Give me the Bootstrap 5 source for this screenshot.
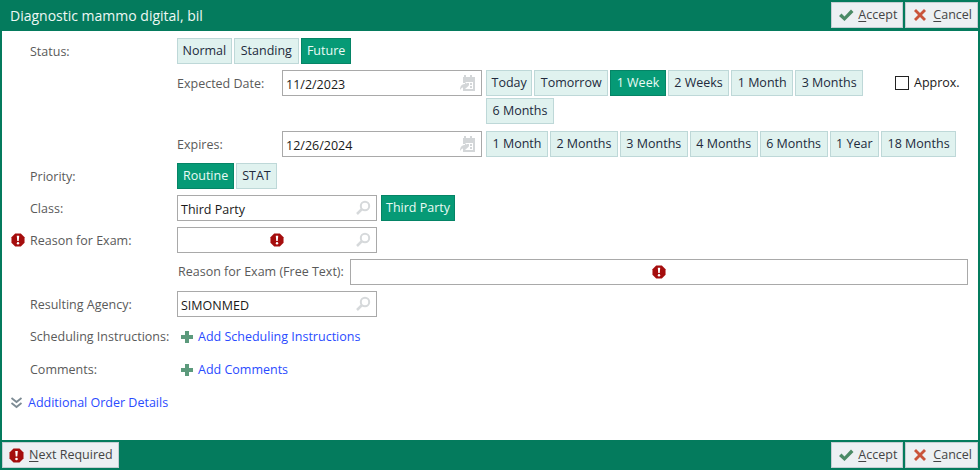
<!DOCTYPE html>
<html lang="en">
<head>
    <meta charset="UTF-8">
    <meta name="viewport" content="width=device-width, initial-scale=1.0">
    <title>Diagnostic mammo digital, bil</title>
    <link href="https://cdn.jsdelivr.net/npm/bootstrap@5.3.0/dist/css/bootstrap.min.css" rel="stylesheet">
    <style>
        html, body { height: 470px; overflow: hidden; }
        body { font-family: "Open Sans", "Noto Sans", sans-serif; font-size: 12.5px; color: #5a5a5a; background: #fff; }
        .order-form { height: 470px; width: 980px; border-left: 2px solid #047b5d; border-right: 2px solid #047b5d; }
        .order-head { height: 31px; margin: 0 -2px; background: #047b5d; color: #eef8f4; font-size: 14px; padding: 0 2px 1px 10px; }
        .order-foot { height: 30px; margin: 0 -2px; background: #047b5d; padding: 2px 2px 0 2px; }
        .order-body { height: 409px; padding: 7px 0 0 8px; }
        .act-btn { height: 26px; padding: 0 5px 0 6px; border: 1px solid #c5ced3; border-radius: 0; background: #ecf0f3; color: #444; font-size: 12.5px; line-height: 24px; display: inline-flex; align-items: center; gap: 4px; }
        .act-btn:hover { background: #ecf0f3; color: #444; border-color: #c5ced3; }
        .act-btn u { text-underline-offset: 2px; }
        .act-cancel { padding: 0 5px 0 7px; gap: 6px; }
        .act-next { gap: 5px; }
        .pick { height: 26px; padding: 0 5px; border: 1px solid #bed8d8; border-radius: 0; background: #e0f2ef; color: #222a3c; font-size: 12.5px; line-height: 24px; white-space: nowrap; }
        .pick:hover { background: #e0f2ef; color: #222a3c; border-color: #bed8d8; }
        .pick.on, .pick.on:hover { background: #069a76; border-color: #058466; color: #eafaf5; }
        .pick-set { gap: 2px; }
        .date-wrap { width: 380px; flex: none; }
        .date-picks .pick { padding: 0 5.5px; }
        .pick.pick-tight { padding: 0 4.5px; }
        .pick.pick-loose { padding: 0 6px; }
        .class-pick { padding: 0 4px; }
        .req-gutter { width: 20px; flex: none; display: flex; align-items: center; padding-left: 1px; }
        .row-label { width: 147px; flex: none; padding-top: 2px; }
        .field-row { min-height: 26px; margin-bottom: 6px; }
        .sub-label { width: 105px; flex: none; padding-top: 5px; }
        .sub-row { padding-left: 167px; }
        .date-row { margin-bottom: 7px; }
        .free-label { margin-left: 1px; }
        .box { height: 26px; width: 200px; flex: none; border: 1px solid #a9a9a9; background: #fff; color: #1a1a1a; padding: 3px 3px 0; position: relative; font-size: 12.5px; line-height: 22px; }
        .box-wide { flex: none; width: 618px; height: 26px; border: 1px solid #a9a9a9; position: relative; margin-left: 6px; }
        .box svg.end { position: absolute; right: 5px; top: 4px; }
        .box svg.mid, .box-wide svg.mid { position: absolute; left: 50%; top: 5px; margin-left: -7px; }
        .approx { margin-left: 29px; color: #1a1a1a; height: 26px; }
        .approx-box { width: 14px; height: 14px; border: 1px solid #222; margin-right: 5px; flex: none; }
        .add-link { color: #2a4bff; text-decoration: none; }
        .plus-link { padding-left: 4px; gap: 5px; padding-top: 2px; }
        .sched-row { margin-bottom: 7px; }
        .more-row { gap: 5px; margin-top: 12px; }
    </style>
</head>
<body>
    <svg class="d-none">
        <symbol id="ico-req" viewBox="0 0 15 15"><path d="M4.500.500h6l4 4v6l-4 4h-6l-4-4v-6z" fill="#a50d0d"/><path d="M6.200 3h2.600l-.5 5.500H6.700z" fill="#fff"/><circle cx="7.500" cy="11" r="1.300" fill="#fff"/></symbol>
        <symbol id="ico-find" viewBox="0 0 16 16"><circle cx="10" cy="6" r="4.200" fill="none" stroke="#d6d9db" stroke-width="2"/><path d="M7 9l-5 5" stroke="#d6d9db" stroke-width="2.500"/></symbol>
        <symbol id="ico-cal" viewBox="0 0 16 16"><path d="M4 0h2v2h4V0h2v2h3v14H3v-4h2v2h8V7H5v1H3V2h1z" fill="#d3d6d8"/><path d="M7 8h2v2H7zM10 8h2v2h-2zM10 11h2v2h-2z" fill="#d3d6d8"/><path d="M0 15c0-4 2-6 5-6V7l4 3.500L5 14v-2c-2 0-4 1-5 3z" fill="#d3d6d8"/></symbol>
        <symbol id="ico-ok" viewBox="0 0 16 14"><path d="M1 8l2.500-2.500 3 3L13 1.500l2.500 2.500L6.500 13z" fill="#4a8a66"/></symbol>
        <symbol id="ico-no" viewBox="0 0 14 14"><path d="M1 3l2-2 4 4 4-4 2 2-4 4 4 4-2 2-4-4-4 4-2-2 4-4z" fill="#c9533a"/></symbol>
        <symbol id="ico-plus" viewBox="0 0 12 12"><path d="M4 0h4v4h4v4H8v4H4V8H0V4h4z" fill="#5c9a7c"/></symbol>
    </svg>

    <div class="order-form d-flex flex-column">
        <div class="order-head d-flex align-items-center justify-content-between">
            <span>Diagnostic mammo digital, bil</span>
            <div class="d-flex pick-set">
                <button type="button" class="btn act-btn"><svg width="16" height="14"><use href="#ico-ok"/></svg><span><u>A</u>ccept</span></button>
                <button type="button" class="btn act-btn act-cancel"><svg width="14" height="14"><use href="#ico-no"/></svg><span><u>C</u>ancel</span></button>
            </div>
        </div>

        <div class="order-body flex-grow-1">
            <div class="field-row d-flex align-items-center">
                <div class="req-gutter"></div>
                <div class="row-label">Status:</div>
                <div class="d-flex pick-set">
                    <button type="button" class="btn pick pick-tight">Normal</button>
                    <button type="button" class="btn pick pick-loose">Standing</button>
                    <button type="button" class="btn pick on">Future</button>
                </div>
            </div>

            <div class="d-flex sub-row date-row">
                <div class="sub-label">Expected Date:</div>
                <div class="box">11/2/2023
                    <svg class="end" width="16" height="16"><use href="#ico-cal"/></svg>
                </div>
                <div class="d-flex flex-wrap pick-set ms-1 date-picks date-wrap">
                    <button type="button" class="btn pick pick-tight">Today</button>
                    <button type="button" class="btn pick">Tomorrow</button>
                    <button type="button" class="btn pick on">1 Week</button>
                    <button type="button" class="btn pick">2 Weeks</button>
                    <button type="button" class="btn pick">1 Month</button>
                    <button type="button" class="btn pick">3 Months</button>
                    <button type="button" class="btn pick">6 Months</button>
                </div>
                <div class="approx d-flex align-items-center align-self-start">
                    <span class="approx-box"></span>Approx.
                </div>
            </div>

            <div class="d-flex sub-row field-row">
                <div class="sub-label">Expires:</div>
                <div class="box">12/26/2024
                    <svg class="end" width="16" height="16"><use href="#ico-cal"/></svg>
                </div>
                <div class="d-flex pick-set ms-1 date-picks">
                    <button type="button" class="btn pick">1 Month</button>
                    <button type="button" class="btn pick">2 Months</button>
                    <button type="button" class="btn pick">3 Months</button>
                    <button type="button" class="btn pick">4 Months</button>
                    <button type="button" class="btn pick">6 Months</button>
                    <button type="button" class="btn pick">1 Year</button>
                    <button type="button" class="btn pick">18 Months</button>
                </div>
            </div>

            <div class="field-row d-flex align-items-center">
                <div class="req-gutter"></div>
                <div class="row-label">Priority:</div>
                <div class="d-flex pick-set">
                    <button type="button" class="btn pick on">Routine</button>
                    <button type="button" class="btn pick">STAT</button>
                </div>
            </div>

            <div class="field-row d-flex align-items-center">
                <div class="req-gutter"></div>
                <div class="row-label">Class:</div>
                <div class="box">Third Party
                    <svg class="end" width="16" height="16"><use href="#ico-find"/></svg>
                </div>
                <button type="button" class="btn pick class-pick on ms-1">Third Party</button>
            </div>

            <div class="field-row d-flex align-items-center">
                <div class="req-gutter"><svg width="14" height="14"><use href="#ico-req"/></svg></div>
                <div class="row-label">Reason for Exam:</div>
                <div class="box">
                    <svg class="mid" width="14" height="14"><use href="#ico-req"/></svg>
                    <svg class="end" width="16" height="16"><use href="#ico-find"/></svg>
                </div>
            </div>

            <div class="field-row d-flex align-items-center sub-row">
                <div class="free-label">Reason for Exam (Free Text):</div>
                <div class="box-wide">
                    <svg class="mid" width="14" height="14"><use href="#ico-req"/></svg>
                </div>
            </div>

            <div class="field-row d-flex align-items-center">
                <div class="req-gutter"></div>
                <div class="row-label">Resulting Agency:</div>
                <div class="box">SIMONMED
                    <svg class="end" width="16" height="16"><use href="#ico-find"/></svg>
                </div>
            </div>

            <div class="field-row sched-row d-flex align-items-center">
                <div class="req-gutter"></div>
                <div class="row-label">Scheduling Instructions:</div>
                <a href="#" class="add-link plus-link d-flex align-items-center">
                    <svg width="12" height="12"><use href="#ico-plus"/></svg>Add Scheduling Instructions</a>
            </div>

            <div class="field-row d-flex align-items-center">
                <div class="req-gutter"></div>
                <div class="row-label">Comments:</div>
                <a href="#" class="add-link plus-link d-flex align-items-center">
                    <svg width="12" height="12"><use href="#ico-plus"/></svg>Add Comments</a>
            </div>

            <div class="more-row d-flex align-items-center">
                <svg width="13" height="12" viewBox="0 0 13 12"><path d="M1.500 1l5 4 5-4M1.500 6l5 4 5-4" fill="none" stroke="#7d8b94" stroke-width="1.800"/></svg>
                <a href="#" class="add-link">Additional Order Details</a>
            </div>
        </div>

        <div class="order-foot d-flex justify-content-between">
            <button type="button" class="btn act-btn act-next"><svg width="15" height="15"><use href="#ico-req"/></svg><span><u>N</u>ext Required</span></button>
            <div class="d-flex pick-set">
                <button type="button" class="btn act-btn"><svg width="16" height="14"><use href="#ico-ok"/></svg><span><u>A</u>ccept</span></button>
                <button type="button" class="btn act-btn act-cancel"><svg width="14" height="14"><use href="#ico-no"/></svg><span><u>C</u>ancel</span></button>
            </div>
        </div>
    </div>
    <script src="https://cdn.jsdelivr.net/npm/bootstrap@5.3.0/dist/js/bootstrap.bundle.min.js"></script>
</body>
</html>
